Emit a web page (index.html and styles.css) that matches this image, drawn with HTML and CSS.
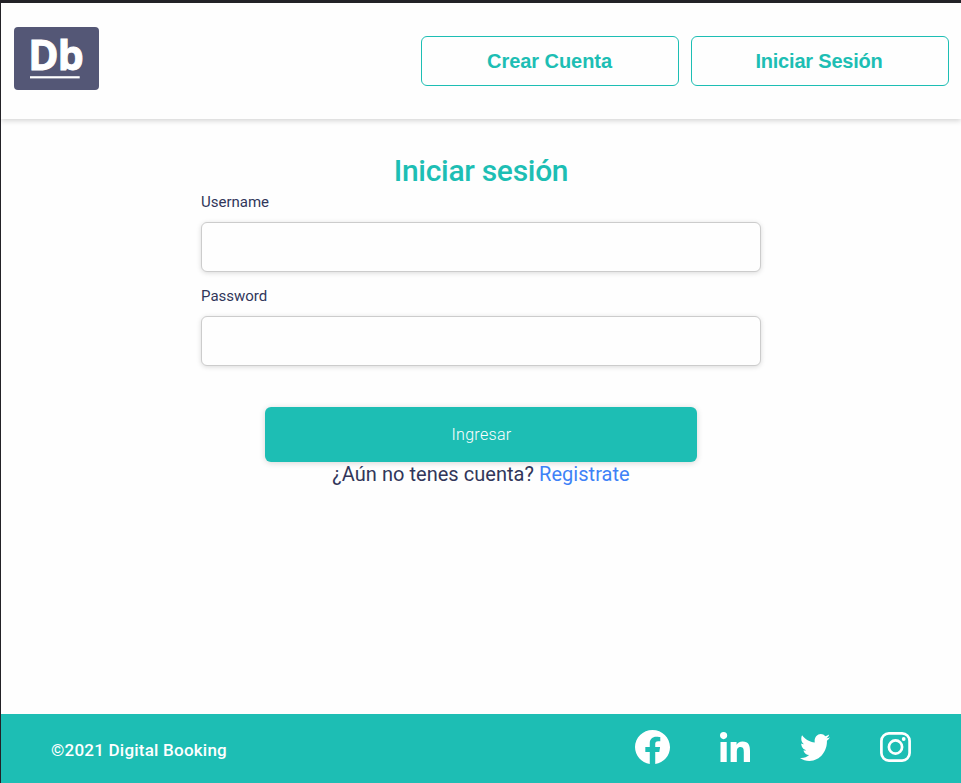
FILE: index.html
```html
<!DOCTYPE html>
<html lang="es">
<head>
<meta charset="utf-8">
<title>Digital Booking</title>
<link rel="stylesheet" href="styles.css">
</head>
<body>
<header class="header">
  <a class="logo" href="#" aria-label="Digital Booking">
    <svg width="85" height="63" viewBox="0 0 85 63">
      <rect width="85" height="63" rx="4" fill="#545776"/>
      <text class="logo-text" x="14.3" y="42.6">Db</text>
      <rect x="16" y="49.2" width="49.7" height="2.2" fill="#fff"/>
    </svg>
  </a>
  <nav class="actions">
    <button class="outline">Crear Cuenta</button>
    <button class="outline outline-tight">Iniciar Sesión</button>
  </nav>
</header>
<main class="main">
  <h1 class="title">Iniciar sesión</h1>
  <form class="form">
    <label class="label" for="user">Username</label>
    <input class="input" id="user" type="text">
    <label class="label" for="pass">Password</label>
    <input class="input" id="pass" type="password">
    <button class="submit" type="button">Ingresar</button>
  </form>
  <p class="register">¿Aún no tenes cuenta? <a href="#">Registrate</a></p>
</main>
<footer class="footer">
  <p class="copy">©2021 Digital Booking</p>
  <div class="social">
    <svg class="facebook" viewBox="2 2.04 20 19.92" preserveAspectRatio="none"><path d="M12 2.04C6.5 2.04 2 6.53 2 12.06C2 17.06 5.66 21.21 10.44 21.96V14.96H7.9V12.06H10.44V9.85C10.44 7.34 11.93 5.96 14.22 5.96C15.31 5.96 16.45 6.15 16.45 6.15V8.62H15.19C13.95 8.62 13.56 9.39 13.56 10.18V12.06H16.34L15.89 14.96H13.56V21.96A10 10 0 0 0 22 12.06C22 6.53 17.5 2.04 12 2.04Z"/></svg>
    <svg class="linkedin" viewBox="0 0 448 448"><path d="M100.28 448H7.4V148.9h92.88zM53.79 108.1C24.09 108.1 0 83.5 0 53.8a53.79 53.79 0 0 1 107.58 0c0 29.7-24.1 54.3-53.79 54.3zM447.9 448h-92.68V302.4c0-34.7-.7-79.2-48.29-79.2-48.29 0-55.69 37.7-55.69 76.7V448h-92.78V148.9h89.08v40.8h1.3c12.4-23.5 42.69-48.3 87.88-48.3 94 0 111.28 61.9 111.28 142.3V448z"/></svg>
    <svg class="twitter" viewBox="0 48 512 416" preserveAspectRatio="none"><path d="M459.37 151.716c.325 4.548.325 9.097.325 13.645 0 138.72-105.583 298.558-298.558 298.558-59.452 0-114.68-17.219-161.137-47.106 8.447.974 16.568 1.299 25.34 1.299 49.055 0 94.213-16.568 130.274-44.832-46.132-.975-84.792-31.188-98.112-72.772 6.498.974 12.995 1.624 19.818 1.624 9.421 0 18.843-1.3 27.614-3.573-48.081-9.747-84.143-51.98-84.143-102.985v-1.299c13.969 7.797 30.214 12.67 47.431 13.319-28.264-18.843-46.781-51.005-46.781-87.391 0-19.492 5.197-37.36 14.294-52.954 51.655 63.675 129.3 105.258 216.365 109.807-1.624-7.797-2.599-15.918-2.599-24.04 0-57.828 46.782-104.934 104.934-104.934 30.213 0 57.502 12.67 76.67 33.137 23.715-4.548 46.456-13.32 66.599-25.34-7.798 24.366-24.366 44.833-46.132 57.827 21.117-2.273 41.584-8.122 60.426-16.243-14.292 20.791-32.161 39.308-52.628 54.253z"/></svg>
    <svg class="instagram" viewBox="0 0 31 30"><rect x="1.4" y="1.4" width="28.2" height="27.2" rx="7.5" fill="none" stroke="#fff" stroke-width="2.7"/><circle cx="15.5" cy="15" r="6.6" fill="none" stroke="#fff" stroke-width="2.7"/><circle cx="23.7" cy="7" r="1.9"/></svg>
  </div>
</footer>
</body>
</html>
```
FILE: styles.css
```css
* {
  box-sizing: border-box;
  margin: 0;
}

body {
  display: flex;
  flex-direction: column;
  height: 100vh;
  border-top: 3px solid #232227;
  border-left: 1px solid #232227;
  background: #fefefe;
  color: #31365a;
  font-family: Roboto, sans-serif;
  overflow: hidden;
}

a {
  color: #3e82f7;
  text-decoration: none;
}

.header {
  display: flex;
  justify-content: space-between;
  align-items: flex-start;
  height: 116px;
  padding: 24px 12px 0 13px;
  background: #fefefe;
  box-shadow: 0 2px 5px rgba(0, 0, 0, 0.16);
}

.logo svg {
  display: block;
  overflow: visible;
}

.logo-text {
  fill: #fff;
  stroke: #fff;
  stroke-width: 1px;
  font: 700 41px "Open Sans", sans-serif;
  letter-spacing: -0.8px;
}

.actions {
  display: flex;
  gap: 12px;
  padding-top: 9px;
}

.outline {
  width: 258px;
  height: 50px;
  padding: 0 1px 0 0;
  border: 1px solid #1dbeb4;
  border-radius: 6px;
  background: #fefefe;
  color: #1dbeb4;
  font: 700 20px "Liberation Sans", Arial, sans-serif;
  letter-spacing: -0.05px;
}

.outline-tight {
  padding-right: 2px;
  letter-spacing: -0.2px;
}

.main {
  display: flex;
  flex: 1;
  flex-direction: column;
  align-items: center;
  padding-top: 34px;
}

.title {
  color: #1dbeb4;
  font-size: 30px;
  font-weight: 500;
  letter-spacing: -0.3px;
  line-height: 36px;
}

.form {
  display: flex;
  flex-direction: column;
  width: 560px;
}

.label {
  height: 33px;
  padding-top: 4px;
  font-size: 15px;
  line-height: 18px;
}

.input {
  height: 50px;
  margin-bottom: 11px;
  border: 1px solid #ccc;
  border-radius: 6px;
  background: #fefefe;
  box-shadow: 0 1px 5px rgba(0, 0, 0, 0.15);
}

.submit {
  align-self: center;
  width: 432px;
  height: 55px;
  margin-top: 30px;
  padding: 0 0 0 1px;
  border: 0;
  border-radius: 6px;
  background: #1dbeb4;
  box-shadow: 0 1px 6px rgba(0, 0, 0, 0.16);
  color: #fff;
  font: 300 16px Roboto, sans-serif;
  letter-spacing: 0.3px;
}

.register {
  font-size: 20px;
  letter-spacing: 0.04px;
  line-height: 24px;
}

.footer {
  display: flex;
  justify-content: space-between;
  height: 69px;
  padding: 0 50px;
  background: #1dbeb4;
  color: #fff;
}

.copy {
  padding-top: 26px;
  font-size: 17px;
  font-weight: 500;
  letter-spacing: 0.22px;
  line-height: 20px;
}

.social {
  display: flex;
  align-items: center;
  height: 66px;
}

.social svg {
  fill: #fff;
}

.facebook {
  width: 35px;
  height: 34px;
}

.linkedin {
  width: 30px;
  height: 30px;
  margin-left: 50px;
}

.twitter {
  width: 30px;
  height: 27px;
  margin-left: 50px;
}

.instagram {
  width: 31px;
  height: 30px;
  margin-left: 50px;
}
```
